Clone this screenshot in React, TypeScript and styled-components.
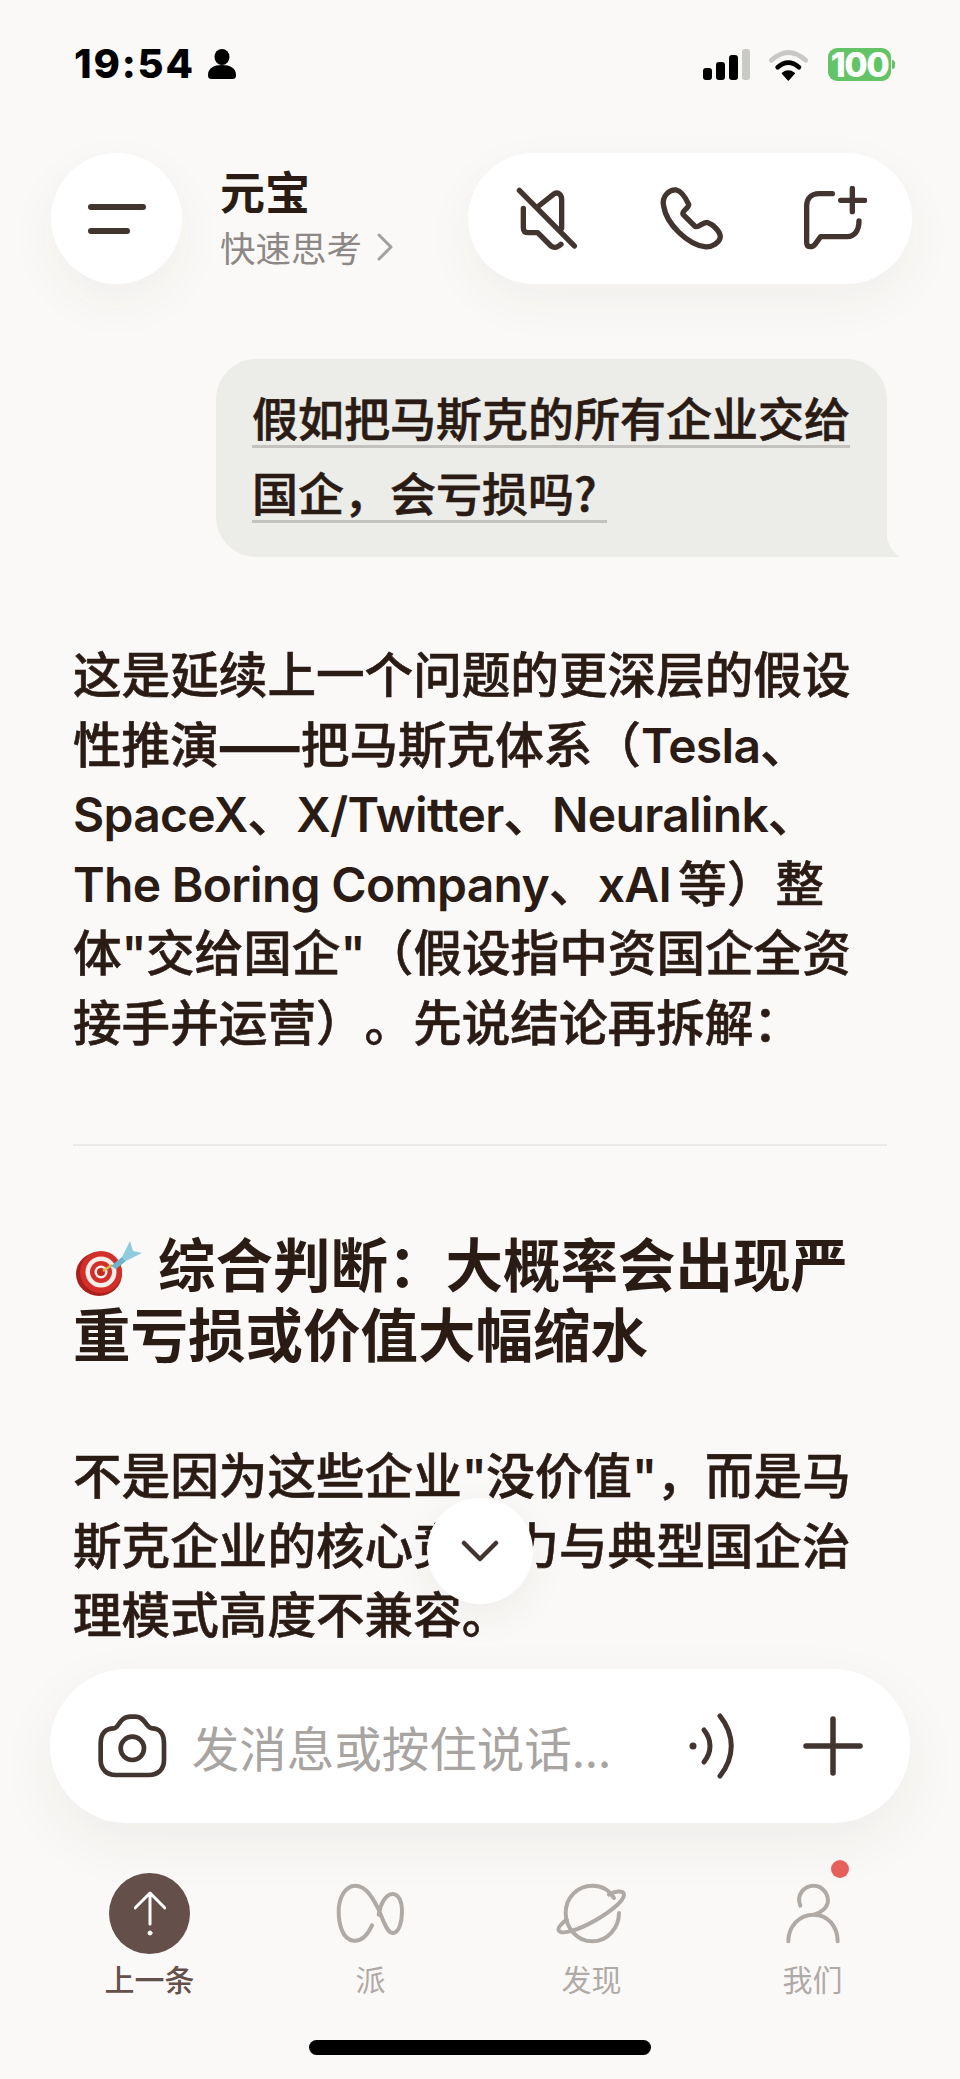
import * as React from 'react'
import styled, { createGlobalStyle } from 'styled-components'

const ink = '#2a1b15'
const iconInk = '#42342e'
const muted = '#b0aaa7'
const cjk = '"Noto Sans CJK SC", "Noto Sans", sans-serif'

const GlobalStyle = createGlobalStyle`
  html, body {
    margin: 0;
    padding: 0;
    background: #faf9f7;
  }
`
const Page = styled.div`
  position: relative;
  width: 960px;
  height: 2079px;
  box-sizing: border-box;
  padding-bottom: 24px;
  overflow: hidden;
  display: flex;
  flex-direction: column;
  background: #faf9f7;
  color: ${ink};
  font-family: Inter, ${cjk};
`
const StatusBar = styled.div`
  height: 153px;
  flex-shrink: 0;
  box-sizing: border-box;
  padding: 46px 48px 0 74px;
  display: flex;
  justify-content: space-between;
  align-items: flex-start;
`
const StatusLeft = styled.div`
  display: flex;
  align-items: center;
  gap: 13px;
  height: 36px;
`
const Clock = styled.span`
  font-size: 40px;
  font-weight: 800;
  color: #000;
  letter-spacing: 1.8px;
  line-height: 36px;
`
const StatusRight = styled.div`
  display: flex;
  align-items: center;
  gap: 18px;
  margin-right: 21px;
  margin-top: 1px;
`
const Battery = styled.div`
  position: relative;
  width: 63px;
  height: 33px;
  border-radius: 9px;
  background: #62c466;
  color: #fff;
  font-size: 34px;
  font-weight: 800;
  line-height: 33px;
  text-align: center;
  letter-spacing: -1.5px;
  &::after {
    content: '';
    position: absolute;
    right: -4px;
    top: 12px;
    width: 3px;
    height: 9px;
    border-radius: 0 3px 3px 0;
    background: #62c466;
  }
`
const Header = styled.div`
  height: 131px;
  flex-shrink: 0;
  padding: 0 48px 0 51px;
  display: flex;
  align-items: center;
`
const RoundButton = styled.div`
  width: 131px;
  height: 131px;
  border-radius: 50%;
  background: #fff;
  box-shadow: 0 18px 50px rgba(60, 50, 40, 0.05);
  display: flex;
  align-items: center;
  justify-content: center;
`
const TitleBlock = styled.div`
  margin-left: 38px;
  display: flex;
  flex-direction: column;
`
const Title = styled.div`
  font-size: 45px;
  line-height: 50px;
  font-weight: 700;
  font-family: ${cjk};
`
const Subtitle = styled.div`
  display: flex;
  align-items: center;
  gap: 14px;
  margin-top: 6px;
  font-size: 35.5px;
  line-height: 50px;
  color: #8d8885;
  font-family: ${cjk};
`
const ActionPill = styled.div`
  margin-left: auto;
  width: 444px;
  height: 131px;
  border-radius: 66px;
  background: #fff;
  box-shadow: 0 18px 50px rgba(60, 50, 40, 0.05);
  box-sizing: border-box;
  padding: 0 45px 0 48px;
  display: flex;
  align-items: center;
  justify-content: space-between;
`
const Chat = styled.div`
  flex: 1;
  min-height: 0;
  overflow: hidden;
  padding: 75px 73px 0;
  display: flex;
  flex-direction: column;
`
const Bubble = styled.div`
  position: relative;
  flex-shrink: 0;
  align-self: flex-end;
  width: 671px;
  height: 198px;
  box-sizing: border-box;
  padding: 20px 30px 0 36px;
  background: #ecece8;
  border-radius: 40px 40px 0 40px;
  font-size: 46px;
  line-height: 75px;
  font-weight: 500;
  -webkit-text-stroke: 0.6px ${ink};
  font-family: ${cjk};
  &::after {
    content: '';
    position: absolute;
    right: -13px;
    bottom: 0;
    width: 14px;
    height: 26px;
    background: #ecece8;
    clip-path: path('M0 0 C1 12 6 21 14 26 L0 26 Z');
  }
`
const BubbleText = styled.span`
  text-decoration: underline;
  text-decoration-color: #c4c2be;
  text-decoration-thickness: 3px;
  text-underline-offset: 9px;
`
const Paragraph = styled.p<{ $top: number }>`
  flex-shrink: 0;
  margin: ${(p) => p.$top}px 0 0;
  font-size: 48.6px;
  line-height: 69.5px;
  font-weight: 500;
  -webkit-text-stroke: 0.6px ${ink};
  white-space: nowrap;
  text-spacing-trim: space-all;
  font-family: ${cjk};
`
const Latin = styled.span`
  font-family: Inter, sans-serif;
  font-weight: 600;
  font-size: 48px;
  line-height: 1;
  letter-spacing: -0.7px;
  -webkit-text-stroke: 0;
`
const Dash = styled.span`
  -webkit-text-stroke: 2.4px ${ink};
`
const Divider = styled.div`
  flex-shrink: 0;
  height: 2px;
  margin-top: 89px;
  background: #ebe9e6;
`
const Heading = styled.h2`
  flex-shrink: 0;
  margin: 81px 0 0;
  font-size: 57.5px;
  line-height: 70px;
  font-weight: 700;
  white-space: nowrap;
  font-family: ${cjk};
`
const HeadingEmoji = styled.svg`
  width: 66px;
  height: 58px;
  margin: 0 16px 0 3px;
  vertical-align: -9px;
`
const ScrollButton = styled.div`
  position: absolute;
  left: 427px;
  top: 1498px;
  width: 106px;
  height: 106px;
  border-radius: 50%;
  background: #fff;
  box-shadow: 0 12px 40px rgba(60, 50, 40, 0.06);
  display: flex;
  align-items: center;
  justify-content: center;
`
const Composer = styled.div`
  flex-shrink: 0;
  height: 154px;
  margin: 0 50px;
  box-sizing: border-box;
  padding: 0 47px 0 48px;
  border-radius: 77px;
  background: #fff;
  box-shadow: 0 20px 60px rgba(60, 50, 40, 0.06);
  display: flex;
  align-items: center;
`
const Placeholder = styled.span`
  margin-left: 25px;
  flex: 1;
  font-size: 47.5px;
  color: #a8a4a1;
  font-family: ${cjk};
`
const ComposerTools = styled.div`
  display: flex;
  align-items: center;
  gap: 65px;
`
const TabBar = styled.div`
  flex-shrink: 0;
  margin-top: 50px;
  padding-left: 39px;
  display: grid;
  grid-template-columns: repeat(4, 221px);
`
const Tab = styled.div`
  position: relative;
  display: flex;
  flex-direction: column;
  align-items: center;
`
const TabIconBox = styled.div`
  height: 81px;
  display: flex;
  align-items: center;
  justify-content: center;
`
const TabLabel = styled.span<{ $active?: boolean }>`
  margin-top: 7px;
  font-size: 30px;
  line-height: 34px;
  color: ${(p) => (p.$active ? '#644f4b' : muted)};
  font-family: ${cjk};
  font-weight: ${(p) => (p.$active ? 500 : 400)};
`
const UpCircle = styled.div`
  width: 81px;
  height: 81px;
  border-radius: 50%;
  background: #644f4b;
  display: flex;
  align-items: center;
  justify-content: center;
`
const Badge = styled.span`
  position: absolute;
  left: 129px;
  top: -13px;
  width: 18px;
  height: 18px;
  border-radius: 50%;
  background: #e5605c;
`
const HomeIndicator = styled.div`
  flex-shrink: 0;
  width: 342px;
  height: 15px;
  margin: 45px auto 0;
  border-radius: 8px;
  background: #000;
`

// Draws a path traced in a larger unit grid, scaled down by three
const Trace = ({
  box,
  color = iconInk,
  weight = 16,
  children,
}: {
  box: [number, number, number, number]
  color?: string
  weight?: number
  children: React.ReactNode
}) => (
  <svg
    width={box[2] / 3}
    height={box[3] / 3}
    viewBox={box.join(' ')}
    fill='none'
    stroke={color}
    strokeWidth={weight}
    strokeLinecap='round'
    strokeLinejoin='round'
  >
    {children}
  </svg>
)

const App = () => (
  <Page>
    <GlobalStyle />
    <StatusBar>
      <StatusLeft>
        <Clock>19:54</Clock>
        <svg width='28' height='30' viewBox='0 0 28 30' fill='#000'>
          <ellipse cx='14' cy='8' rx='7.5' ry='8' />
          <path d='M0 26c0-7 6-10 14-10s14 3 14 10c0 3-1 4-4 4H4c-3 0-4-1-4-4z' />
        </svg>
      </StatusLeft>
      <StatusRight>
        <svg width='48' height='32' viewBox='0 0 48 32'>
          <rect x='1' y='19' width='9' height='12' rx='3' fill='#000' />
          <rect x='14' y='13' width='9' height='18' rx='3' fill='#000' />
          <rect x='27' y='6' width='9' height='25' rx='3' fill='#000' />
          <rect x='40' y='0' width='8' height='31' rx='3' fill='#c9c9c6' />
        </svg>
        <Trace box={[325, 45, 125, 105]} color='#000' weight={14}>
          <path d='M335 85Q386 38 438 85' stroke='#c8c8c6' />
          <path d='M354 106Q386 78 418 106' />
          <path d='M368 124Q386 110 404 124L386 144Z' fill='#000' strokeWidth={4} />
        </Trace>
        <Battery>100</Battery>
      </StatusRight>
    </StatusBar>

    <Header>
      <RoundButton>
        <svg width='58' height='32' viewBox='0 0 58 32' fill='none' stroke={iconInk} strokeWidth='6' strokeLinecap='round'>
          <path d='M3 4H55M3 28H39' />
        </svg>
      </RoundButton>
      <TitleBlock>
        <Title>元宝</Title>
        <Subtitle>
          快速思考
          <svg width='18' height='28' viewBox='0 0 18 28' fill='none' stroke='#a3a09d' strokeWidth='3' strokeLinecap='round' strokeLinejoin='round'>
            <path d='M3 2l12 12L3 26' />
          </svg>
        </Subtitle>
      </TitleBlock>
      <ActionPill>
        <Trace box={[50, 48, 190, 190]}>
          <path d='M60 58L225 225' />
          <path d='M118 105L165 68C175 62 187 70 187 85V172' />
          <path d='M72 112V170C72 180 78 185 88 185H115L155 225C165 232 178 228 185 220' />
        </Trace>
        <Trace box={[470, 50, 200, 195]}>
          <path d='M487 110C480 80 505 60 525 62C540 65 555 90 562 105C565 115 540 125 545 135L580 170C590 180 605 155 620 160C635 165 655 185 657 200C657 220 630 235 610 232C560 225 495 165 487 110Z' />
        </Trace>
        <Trace box={[915, 45, 190, 195]}>
          <path d='M1000 68H960C935 68 923 85 923 105V215C923 230 940 230 948 220L965 197H1045C1065 197 1080 180 1080 150' />
          <path d='M1060 52V122M1025 88H1097' />
        </Trace>
      </ActionPill>
    </Header>

    <Chat>
      <Bubble>
        <BubbleText>假如把马斯克的所有企业交给国企&#xFF0C;会亏损吗?&nbsp;</BubbleText>
      </Bubble>
      <Paragraph $top={81}>
        这是延续上一个问题的更深层的假设
        <br />
        性推演<Dash>——</Dash>把马斯克体系&#xFF08;<Latin>Tesla</Latin>、
        <br />
        <Latin>SpaceX</Latin>、<Latin>X/Twitter</Latin>、<Latin>Neuralink</Latin>、
        <br />
        <Latin>The Boring Company</Latin>、<Latin>xAI&#x2009;</Latin>等&#xFF09;整
        <br />
        体<Latin>"</Latin>交给国企<Latin>"</Latin>&#xFF08;假设指中资国企全资
        <br />
        接手并运营&#xFF09;。先说结论再拆解&#xFF1A;
      </Paragraph>
      <Divider />
      <Heading>
        <HeadingEmoji viewBox='0 0 66 58'>
          <ellipse cx='23' cy='36' rx='23' ry='22' fill='#a81f1c' />
          <ellipse cx='25' cy='34' rx='21' ry='21' fill='#d32f2a' />
          <ellipse cx='25' cy='34' rx='15.5' ry='15.5' fill='#f4eeea' />
          <ellipse cx='25' cy='34' rx='11' ry='11' fill='#d32f2a' />
          <ellipse cx='25' cy='34' rx='6.5' ry='6.5' fill='#f4eeea' />
          <ellipse cx='25' cy='34' rx='4' ry='4' fill='#c4281f' />
          <path d='M27 33L36 27' stroke='#e0b84a' strokeWidth='2.5' />
          <path d='M35 28L46 19L50 23L40 31Z' fill='#6fb4c9' />
          <path d='M46 19L54 3L57 13L66 15L50 23Z' fill='#8fcbdc' />
        </HeadingEmoji>
        综合判断&#xFF1A;大概率会出现严
        <br />
        重亏损或价值大幅缩水
      </Heading>
      <Paragraph $top={72}>
        不是因为这些企业<Latin>"</Latin>没价值<Latin>"</Latin>&#xFF0C;而是马
        <br />
        斯克企业的核心竞争力与典型国企治
        <br />
        理模式高度不兼容。
      </Paragraph>
    </Chat>

    <ScrollButton>
      <svg width='38' height='22' viewBox='0 0 38 22' fill='none' stroke={iconInk} strokeWidth='4.5' strokeLinecap='round' strokeLinejoin='round'>
        <path d='M3 3l16 16L35 3' />
      </svg>
    </ScrollButton>

    <Composer>
      <Trace box={[52, 42, 206, 190]} weight={14}>
        <path d='M60 130C60 100 75 85 100 85C115 85 115 50 150 50H165C195 50 195 85 215 85C235 85 250 100 250 130V180C250 210 230 225 205 225H105C80 225 60 210 60 180Z' />
        <circle cx='155' cy='145' r='35' />
      </Trace>
      <Placeholder>发消息或按住说话...</Placeholder>
      <ComposerTools>
        <svg width='52' height='66' viewBox='0 0 52 66' fill='none' stroke={iconInk} strokeWidth='5' strokeLinecap='round'>
          <circle cx='7' cy='33' r='3.5' fill={iconInk} stroke='none' />
          <path d='M18 17C26 27 26 39 18 49' />
          <path d='M34 3C49 22 49 44 34 63' />
        </svg>
        <svg width='60' height='60' viewBox='0 0 60 60' fill='none' stroke={iconInk} strokeWidth='5.5' strokeLinecap='round'>
          <path d='M30 3V57M3 30H57' />
        </svg>
      </ComposerTools>
    </Composer>

    <TabBar>
      <Tab>
        <TabIconBox>
          <UpCircle>
            <svg width='32' height='46' viewBox='0 0 32 46' fill='none' stroke='#fff' strokeWidth='3' strokeLinecap='round' strokeLinejoin='round'>
              <path d='M1 17L16 2L31 17M16 2V33' />
              <circle cx='16' cy='42' r='2' fill='#fff' strokeWidth='1' />
            </svg>
          </UpCircle>
        </TabIconBox>
        <TabLabel $active>上一条</TabLabel>
      </Tab>
      <Tab>
        <TabIconBox>
          <Trace box={[42, 70, 206, 182]} color={muted} weight={12}>
            <path d='M150 197C135 230 115 245 95 243C60 240 50 190 50 155C50 115 70 78 100 78C130 78 150 110 170 150C185 185 195 220 212 220C232 220 240 185 240 155C240 125 230 103 212 103C190 103 175 135 170 165' />
          </Trace>
        </TabIconBox>
        <TabLabel>派</TabLabel>
      </Tab>
      <Tab>
        <TabIconBox>
          <Trace box={[676, 70, 212, 182]} color={muted} weight={12}>
            <path d='M850 115C835 90 810 78 785 78C740 78 705 115 705 160C705 205 740 245 785 245C830 245 865 205 865 160' />
            <path d='M835 105C850 95 880 90 880 105C880 125 830 165 770 195C730 215 690 225 684 212C680 203 695 190 708 180' />
          </Trace>
        </TabIconBox>
        <TabLabel>发现</TabLabel>
      </Tab>
      <Tab>
        <TabIconBox>
          <Trace box={[1345, 70, 162, 182]} color={muted} weight={12}>
            <path d='M1388 138C1375 105 1400 78 1428 78C1455 78 1475 105 1470 130C1465 150 1450 158 1430 165' />
            <path d='M1352 245C1352 200 1385 165 1428 165C1470 165 1500 200 1500 245' />
          </Trace>
        </TabIconBox>
        <TabLabel>我们</TabLabel>
        <Badge />
      </Tab>
    </TabBar>

    <HomeIndicator />
  </Page>
)

export default App
